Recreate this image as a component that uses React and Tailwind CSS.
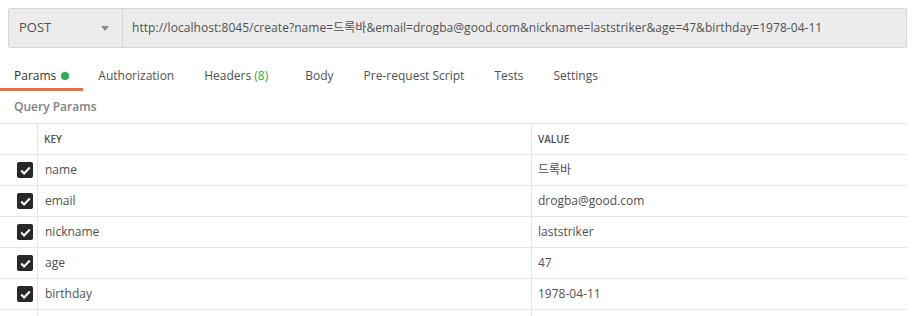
import React from "react";

const rows = [
  ["name", "드록바"],
  ["email", "drogba@good.com"],
  ["nickname", "laststriker"],
  ["age", "47"],
  ["birthday", "1978-04-11"],
];

function Check() {
  return (
    <div className="w-4 h-4 rounded-[2px] bg-[#282828] flex items-center justify-center">
      <svg width="11" height="9" viewBox="0 0 11 9">
        <path d="M1.2 4.6 L4.1 7.4 L9.8 1.6" fill="none" stroke="#fff" strokeWidth="2.1" />
      </svg>
    </div>
  );
}

export default function App() {
  const font = { fontFamily: '"Open Sans", "Noto Sans CJK KR", sans-serif' };
  return (
    <div className="w-[913px] h-[316px] bg-white overflow-hidden text-[#505050]" style={font}>
      <div className="pt-2 pl-2 pr-[6px]">
        <div className="flex h-[40px] border border-[#d6d6d6] rounded-[2px] bg-[#ececec]">
          <div className="w-[114px] flex items-center justify-between pl-[10px] pr-[13px] border-r border-[#d6d6d6]">
            <span className="text-[13px]">POST</span>
            <svg width="8" height="5" viewBox="0 0 8 5">
              <path d="M0 0 L8 0 L4 5 Z" fill="#8a8a8a" />
            </svg>
          </div>
          <div className="flex items-center pl-[9px] text-[12px] whitespace-nowrap tracking-[0.05px]">
            http://localhost:8045/create?name=드록바&amp;email=drogba@good.com&amp;nickname=laststriker&amp;age=47&amp;birthday=1978-04-11
          </div>
        </div>
      </div>

      <div className="flex h-[43px] pt-[19px] text-[12px]">
        <div className="flex items-start px-[14px] border-b-[3px] border-[#f26b3a] h-[24px]">
          <span className="text-[#333]">Params</span>
          <span className="w-2 h-2 rounded-full bg-[#26b047] ml-[5px] mt-[5px]"></span>
        </div>
        <div className="pl-[15px] pr-[15px]">Authorization</div>
        <div className="pl-[15px] pr-[22px]">
          Headers <span className="text-[#26b047]">(8)</span>
        </div>
        <div className="px-[15px]">Body</div>
        <div className="px-[15px]">Pre-request Script</div>
        <div className="px-[15px]">Tests</div>
        <div className="px-[15px]">Settings</div>
      </div>

      <div className="pl-[14px] pt-[7px] h-[32px] text-[12px] font-semibold text-[#808080]">Query Params</div>

      <div className="w-[907px] border-t border-[#e6e6e6]">
        <div className="flex h-[31px] border-b border-[#e6e6e6]">
          <div className="w-[38px] border-r border-[#e6e6e6]"></div>
          <div className="w-[494px] border-r border-[#e6e6e6] flex items-center pl-[6px] text-[10px] font-semibold text-[#505050]">KEY</div>
          <div className="flex-1 flex items-center pl-[6px] text-[10px] font-semibold text-[#505050]">VALUE</div>
        </div>
        {rows.map(([k, v]) => (
          <div key={k} className="flex h-[31px] border-b border-[#e6e6e6]">
            <div className="w-[38px] border-r border-[#e6e6e6] flex items-center justify-end pr-[4px]">
              <Check />
            </div>
            <div className="w-[494px] border-r border-[#e6e6e6] flex items-center pl-[7px] text-[12px]">{k}</div>
            <div className="flex-1 flex items-center pl-[6px] text-[12px]">{v}</div>
          </div>
        ))}
        <div className="flex h-[10px]">
          <div className="w-[38px] border-r border-[#e6e6e6]"></div>
          <div className="w-[494px] border-r border-[#e6e6e6]"></div>
        </div>
      </div>
    </div>
  );
}
